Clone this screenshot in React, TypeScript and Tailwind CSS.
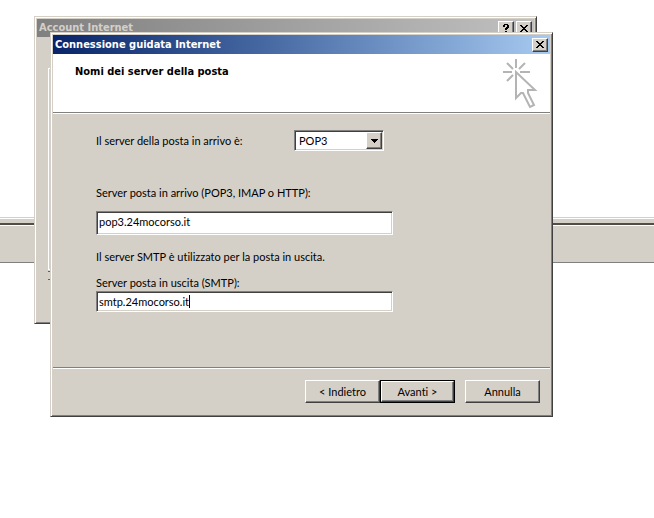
import { useState, type ReactNode } from "react";

const servers = ["POP3", "IMAP", "HTTP"];

const raised =
  "border border-t-white border-l-white border-r-[#404040] border-b-[#404040] bg-[#d4d0c8] shadow-[inset_-1px_-1px_0_#808080]";
const sunken =
  "border border-t-[#808080] border-l-[#808080] border-r-white border-b-white bg-white shadow-[inset_1px_1px_0_#404040,inset_-1px_-1px_0_#d4d0c8]";

function Frame({ className, children }: { className: string; children: ReactNode }) {
  return (
    <section
      className={`absolute flex w-[calc(100%-100px)] max-w-[503px] flex-col border border-t-[#d4d0c8] border-l-[#d4d0c8] border-r-[#404040] border-b-[#404040] bg-[#d4d0c8] p-0.5 shadow-[inset_1px_1px_0_#fff,inset_-1px_-1px_0_#808080] ${className}`}
    >
      {children}
    </section>
  );
}

function CaptionButton({ label, children }: { label: string; children: ReactNode }) {
  return (
    <button aria-label={label} className={`flex h-3.5 w-4 items-center justify-center ${raised}`}>
      {children}
    </button>
  );
}

function CloseIcon() {
  return (
    <svg width="8" height="7" viewBox="0 0 8 7" shapeRendering="crispEdges">
      <path
        fill="#000"
        d="M0 0h2v1h1v1h2v-1h1v-1h2v1h-1v1h-1v1h-1v1h1v1h1v1h1v1h-2v-1h-1v-1h-2v1h-1v1h-2v-1h1v-1h1v-1h1v-1h-1v-1h-1v-1h-1z"
      />
    </svg>
  );
}

function HelpIcon() {
  return (
    <svg width="6" height="9" viewBox="0 0 6 9" shapeRendering="crispEdges">
      <path
        fill="#000"
        d="M1 0h4v1h1v3h-1v1h-1v1h-2v-2h1v-1h1v-2h-2v2h-2v-2h1zM2 7h2v2h-2z"
      />
    </svg>
  );
}

function PointerIcon() {
  return (
    <svg width="36" height="52" viewBox="0 0 36 52" fill="none" stroke="#b4b4b4" strokeWidth="2">
      <path d="M14 1v9M1 14h9M18 14h10M5 5l6 6M23 5l-6 6M5 23l6-6" />
      <path d="M14 14v26l5-5h2l7 14 4-2-6-12v-3h7z" />
    </svg>
  );
}

export default function App() {
  const [type, setType] = useState("POP3");
  const [incoming, setIncoming] = useState("pop3.24mocorso.it");
  const [outgoing, setOutgoing] = useState("smtp.24mocorso.it");

  return (
    <main className="relative min-h-screen overflow-hidden bg-white pt-[217px] font-['Lato','Roboto',sans-serif] text-[11px] leading-4 text-black [font-variant-ligatures:none]">
      {/* Window edge behind the dialogs */}
      <div className="border-t border-b border-t-[#d4d0c8] border-b-[#808080]">
        <div className="h-[7px] border-t border-b-2 border-t-white border-b-[#504c48] bg-[#d4d0c8]" />
        <div className="h-[37px] border-t border-t-white bg-[#d4d0c8]" />
      </div>

      {/* Account Internet */}
      <Frame className="top-4 left-[34px] h-[308px]">
        <header className="flex h-[18px] items-center justify-between bg-linear-to-r from-[#808080] to-[#c0c0c0] px-0.5">
          <h2 className="font-['DejaVu_Sans_Condensed','DejaVu_Sans',sans-serif] text-[11px] font-bold text-[#d4d0c8]">
            Account Internet
          </h2>
          <div className="flex gap-0.5">
            <CaptionButton label="Guida">
              <HelpIcon />
            </CaptionButton>
            <CaptionButton label="Chiudi account">
              <CloseIcon />
            </CaptionButton>
          </div>
        </header>
        <div className="mx-[11px] mt-[31px] h-[202px] border border-white" />
        <div className="mx-[11px] mt-px h-[9px] w-1 border-t border-b border-[#606060]" />
      </Frame>

      {/* Connessione guidata */}
      <Frame className="top-8 left-[50px]">
        <header className="flex h-[19px] items-center justify-between bg-linear-to-r from-[#0a246a] to-[#a6caf0] px-0.5">
          <h1 className="font-['DejaVu_Sans_Condensed','DejaVu_Sans',sans-serif] text-[11px] font-bold text-white">
            Connessione guidata Internet
          </h1>
          <CaptionButton label="Chiudi">
            <CloseIcon />
          </CaptionButton>
        </header>

        <div className="flex h-[59px] justify-between border-b border-[#808080] bg-white pt-1 pr-3 pl-[22px]">
          <h2 className="pt-1 font-['DejaVu_Sans_Condensed','DejaVu_Sans',sans-serif] text-[11px] leading-5 font-bold">
            Nomi dei server della posta
          </h2>
          <PointerIcon />
        </div>

        <form id="servers" className="flex h-[254px] flex-col border-t border-white pt-4 pr-10 pl-[43px]">
          <div className="flex items-center">
            <label htmlFor="type" className="w-[198px]">
              Il server della posta in arrivo è:
            </label>
            <div className="relative">
              <select
                id="type"
                value={type}
                onChange={(e) => setType(e.target.value)}
                className={`h-[21px] w-[90px] appearance-none pl-1 outline-none ${sunken}`}
              >
                {servers.map((name) => (
                  <option key={name}>{name}</option>
                ))}
              </select>
              <span
                className={`pointer-events-none absolute top-0.5 right-0.5 flex h-[17px] w-4 items-center justify-center ${raised}`}
              >
                <svg width="7" height="4" viewBox="0 0 7 4" shapeRendering="crispEdges">
                  <path d="M0 0h7v1h-1v1h-1v1h-1v1h-1v-1h-1v-1h-1v-1h-1z" />
                </svg>
              </span>
            </div>
          </div>

          <label htmlFor="incoming" className="mt-[34px]">
            Server posta in arrivo (POP3, IMAP o HTTP):
          </label>
          <input
            id="incoming"
            value={incoming}
            onChange={(e) => setIncoming(e.target.value)}
            className={`mt-2.5 h-6 w-full max-w-[297px] px-0.5 pb-1 outline-none ${sunken}`}
          />

          <p className="mt-3.5">Il server SMTP è utilizzato per la posta in uscita.</p>
          <label htmlFor="outgoing" className="mt-2.5">
            Server posta in uscita (SMTP):
          </label>
          <div className="relative flex w-full max-w-[297px]">
            <input
              id="outgoing"
              value={outgoing}
              onChange={(e) => setOutgoing(e.target.value)}
              className={`h-[21px] w-full px-0.5 outline-none ${sunken}`}
            />
            <span className="absolute top-1 left-[93px] h-[13px] w-px bg-black" />
          </div>
        </form>

        <footer className="flex h-[47px] justify-end border-t border-[#808080] pt-3 pr-2.5 shadow-[inset_0_1px_0_#fff]">
          <button className={`h-[23px] w-[75px] ${raised}`}>&lt; Indietro</button>
          <button className="h-[23px] w-[75px] border border-black">
            <span className={`flex h-full items-center justify-center ${raised}`}>Avanti &gt;</span>
          </button>
          <button className={`ml-2.5 h-[23px] w-[75px] ${raised}`}>Annulla</button>
        </footer>
      </Frame>
    </main>
  );
}
